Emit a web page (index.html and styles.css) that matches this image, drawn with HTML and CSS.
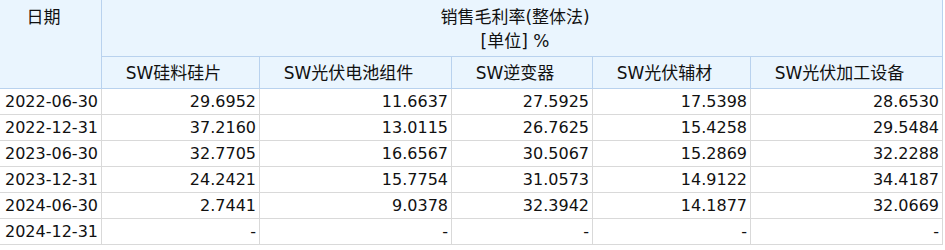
FILE: index.html
```html
<!DOCTYPE html>
<html lang="zh-CN">
<head>
<meta charset="utf-8">
<link rel="stylesheet" href="styles.css">
</head>
<body>
<table class="grid">
  <colgroup>
    <col class="k1">
    <col class="k2">
    <col class="k3">
    <col class="k4">
    <col class="k5">
    <col class="k6">
  </colgroup>
  <thead>
    <tr class="h1">
      <th class="c-date" rowspan="2">日期</th>
      <th class="c-title" colspan="5">销售毛利率(整体法)<br>[单位] %</th>
    </tr>
    <tr class="h2">
      <th>SW硅料硅片</th>
      <th>SW光伏电池组件</th>
      <th>SW逆变器</th>
      <th>SW光伏辅材</th>
      <th>SW光伏加工设备</th>
    </tr>
  </thead>
  <tbody>
    <tr><td class="d">2022-06-30</td><td>29.6952</td><td>11.6637</td><td>27.5925</td><td>17.5398</td><td>28.6530</td></tr>
    <tr><td class="d">2022-12-31</td><td>37.2160</td><td>13.0115</td><td>26.7625</td><td>15.4258</td><td>29.5484</td></tr>
    <tr><td class="d">2023-06-30</td><td>32.7705</td><td>16.6567</td><td>30.5067</td><td>15.2869</td><td>32.2288</td></tr>
    <tr><td class="d">2023-12-31</td><td>24.2421</td><td>15.7754</td><td>31.0573</td><td>14.9122</td><td>34.4187</td></tr>
    <tr><td class="d">2024-06-30</td><td>2.7441</td><td>9.0378</td><td>32.3942</td><td>14.1877</td><td>32.0669</td></tr>
    <tr><td class="d">2024-12-31</td><td>-</td><td>-</td><td>-</td><td>-</td><td>-</td></tr>
  </tbody>
</table>
</body>
</html>
```
FILE: styles.css
```css
html, body {
  margin: 0;
  padding: 0;
  background: #ffffff;
}
.grid {
  border-collapse: separate;
  border-spacing: 0;
  table-layout: fixed;
  width: 943px;
  font-family: "DejaVu Sans", "Noto Sans CJK SC", sans-serif;
  font-size: 16px;
  color: #111111;
}
.k1 { width: 102px; }
.k2 { width: 158px; }
.k3 { width: 192px; }
.k4 { width: 141px; }
.k5 { width: 158px; }
.k6 { width: 192px; }
.grid th {
  background: #eaf5fe;
  font-weight: normal;
  font-size: 17px;
  border-right: 1px solid #b9d2ee;
  border-bottom: 1px solid #b9d2ee;
  box-sizing: border-box;
  padding: 0 14px 0 0;
  line-height: 24px;
}
.c-date {
  height: 89px;
  vertical-align: top;
  padding-top: 5px !important;
}
.h1 .c-title {
  height: 57px;
  vertical-align: top;
  padding-top: 5px !important;
}
.h2 th {
  height: 32px;
  vertical-align: middle;
}
.grid td {
  height: 26px;
  box-sizing: border-box;
  border-right: 1px solid #d9d9d9;
  border-bottom: 1px solid #d9d9d9;
  padding: 0 3px 0 0;
  text-align: right;
  line-height: 24px;
  white-space: nowrap;
}
.grid td.d {
  text-align: left;
  padding: 0 0 0 5px;
}
```
